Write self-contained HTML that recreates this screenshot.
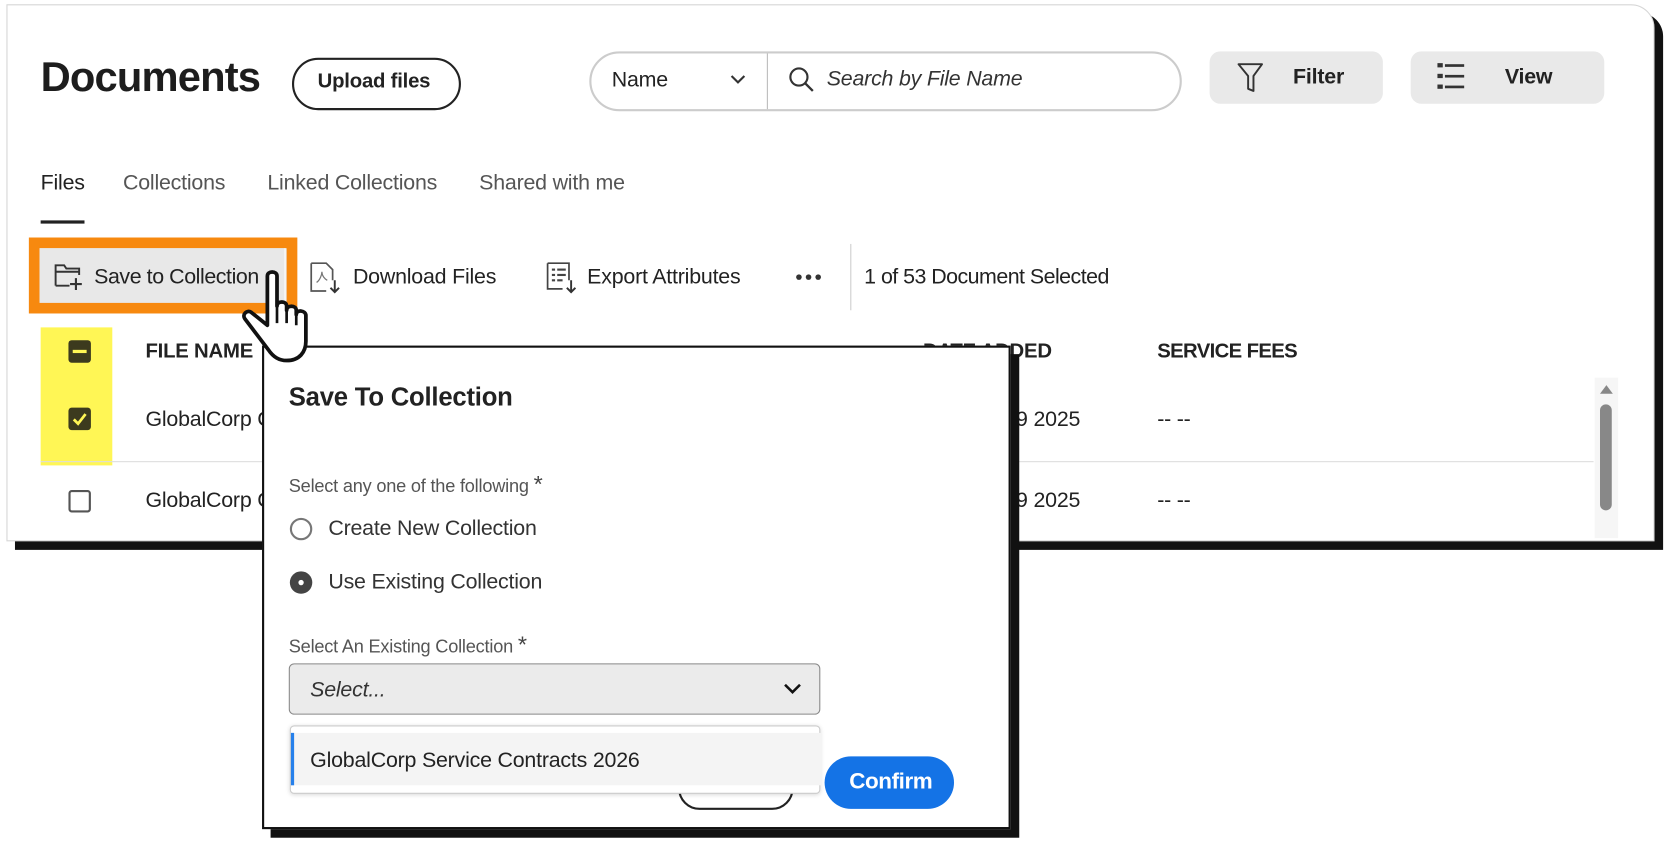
<!DOCTYPE html>
<html><head><meta charset="utf-8"><style>
html,body{margin:0;padding:0;background:#fff;width:1677px;height:842px;overflow:hidden}
#w{position:absolute;left:0;top:0;width:1568px;height:787px;transform:scale(1.06952,1.06989);transform-origin:0 0;font-family:"Liberation Sans",sans-serif;color:#222}
.a{position:absolute}
.card{left:6px;top:4px;width:1539px;height:500px;border:1px solid #d6d6d6;border-radius:0 22px 0 0;background:#fff;box-shadow:8px 8px 0 #111}
.t{white-space:nowrap;position:absolute;letter-spacing:-0.2px}
.ico{position:absolute}
</style></head><body><div id="w">
<div class="a card"></div>
<div class="t" style="left:38px;top:51px;font-size:39px;font-weight:bold;color:#1d1d1d;letter-spacing:-0.8px">Documents</div>
<div class="a" style="left:273px;top:54px;width:154px;height:45px;border:2px solid #222;border-radius:25px"></div>
<div class="t" style="left:297px;top:66px;font-size:19px;font-weight:bold">Upload files</div>
<div class="a" style="left:551px;top:48px;width:550px;height:52px;border:2px solid #ccc;border-radius:28px"></div>
<div class="a" style="left:717px;top:50px;width:1px;height:52px;background:#bbb"></div>
<div class="t" style="left:572px;top:64px;font-size:20px">Name</div>
<svg class="ico" style="left:682px;top:68px" width="16" height="12"><path d="M2 3l6 6 6-6" stroke="#333" stroke-width="2" fill="none"/></svg>
<svg class="ico" style="left:736px;top:61px" width="28" height="28"><circle cx="11" cy="11" r="8" stroke="#333" stroke-width="2" fill="none"/><path d="M17 17l7 7" stroke="#333" stroke-width="2.2"/></svg>
<div class="t" style="left:773px;top:63px;font-size:20px;font-style:italic;color:#333">Search by File Name</div>
<div class="a" style="left:1131px;top:48px;width:162px;height:49px;background:#e9e9e9;border-radius:10px"></div>
<svg class="ico" style="left:1156px;top:58px" width="28" height="30"><path d="M2 2h22l-8 11v14l-5-2V13z" stroke="#333" stroke-width="1.8" fill="none" stroke-linejoin="round"/></svg>
<div class="t" style="left:1209px;top:61px;font-size:20px;font-weight:bold">Filter</div>
<div class="a" style="left:1319px;top:48px;width:181px;height:49px;background:#e9e9e9;border-radius:10px"></div>
<svg class="ico" style="left:1343px;top:58px" width="30" height="28"><g fill="#333"><rect x="1" y="1" width="5" height="4"/><rect x="8" y="2" width="18" height="2.5"/><rect x="1" y="11" width="5" height="4"/><rect x="8" y="12" width="18" height="2.5"/><rect x="1" y="21" width="5" height="4"/><rect x="8" y="22" width="18" height="2.5"/></g></svg>
<div class="t" style="left:1407px;top:61px;font-size:20px;font-weight:bold">View</div>
<div class="t" style="left:38px;top:160px;font-size:20px;color:#222">Files</div>
<div class="t" style="left:115px;top:160px;font-size:20px;color:#555">Collections</div>
<div class="t" style="left:250px;top:160px;font-size:20px;color:#555">Linked Collections</div>
<div class="t" style="left:448px;top:160px;font-size:20px;color:#555">Shared with me</div>
<div class="a" style="left:38px;top:206px;width:41px;height:3px;background:#222"></div>
<div class="a" style="left:27px;top:222px;width:231px;height:51px;border:10px solid #f7890f;background:#e8e8e8"></div>
<div class="a" style="left:37px;top:232px;width:229px;height:51px;background:#e8e8e8;border-right:1px solid #fff"></div>
<svg class="ico" style="left:50px;top:245px" width="30" height="28"><path d="M2 22V3h8l2 3h12v6M2 22h13M2 9h22" stroke="#333" stroke-width="1.8" fill="none"/><path d="M21 15v11M15.5 20.5h11" stroke="#333" stroke-width="2"/></svg>
<div class="t" style="left:88px;top:248px;font-size:20px;letter-spacing:-0.4px">Save to Collection</div>
<svg class="ico" style="left:289px;top:244px" width="32" height="32"><path d="M2 2h14l6 6v10M2 2v26h14" stroke="#555" stroke-width="1.6" fill="none"/><path d="M7 20c3-2 5-7 5-10 0 4 3 7 5 8" stroke="#777" stroke-width="1.2" fill="none"/><path d="M24 18v11M20 25l4 4 4-4" stroke="#333" stroke-width="1.8" fill="none"/></svg>
<div class="t" style="left:330px;top:248px;font-size:20px">Download Files</div>
<svg class="ico" style="left:510px;top:244px" width="32" height="32"><path d="M2 2h20v16M2 2v24h14" stroke="#444" stroke-width="1.6" fill="none"/><g fill="#444"><rect x="6" y="7" width="3" height="2"/><rect x="11" y="7" width="8" height="2"/><rect x="6" y="12" width="3" height="2"/><rect x="11" y="12" width="8" height="2"/><rect x="6" y="17" width="3" height="2"/><rect x="11" y="17" width="5" height="2"/></g><path d="M24 18v11M20 25l4 4 4-4" stroke="#333" stroke-width="1.8" fill="none"/></svg>
<div class="t" style="left:549px;top:248px;font-size:20px">Export Attributes</div>
<svg class="ico" style="left:743px;top:255px" width="28" height="8"><circle cx="4" cy="4" r="2.6" fill="#333"/><circle cx="13" cy="4" r="2.6" fill="#333"/><circle cx="22" cy="4" r="2.6" fill="#333"/></svg>
<div class="a" style="left:795px;top:228px;width:1px;height:62px;background:#ccc"></div>
<div class="t" style="left:808px;top:248px;font-size:20px;letter-spacing:-0.5px">1 of 53 Document Selected</div>
<div class="a" style="left:38px;top:306px;width:67px;height:129px;background:#fff655"></div>
<div class="a" style="left:64px;top:318px;width:21px;height:21px;background:#3c3a1e;border-radius:3px"></div>
<div class="a" style="left:68px;top:327px;width:13px;height:3px;background:#fff655"></div>
<div class="t" style="left:136px;top:318px;font-size:19px;font-weight:bold">FILE NAME</div>
<div class="t" style="left:863px;top:318px;font-size:19px;font-weight:bold">DATE ADDED</div>
<div class="t" style="left:1082px;top:318px;font-size:19px;font-weight:bold;letter-spacing:-0.6px">SERVICE FEES</div>
<div class="a" style="left:64px;top:381px;width:21px;height:21px;background:#3c3a1e;border-radius:3px"></div>
<svg class="ico" style="left:64px;top:381px" width="21" height="21"><path d="M5 11l4 4 7-9" stroke="#fff655" stroke-width="2.6" fill="none"/></svg>
<div class="t" style="left:136px;top:381px;font-size:20px">GlobalCorp Co</div>
<div class="t" style="left:950px;top:381px;font-size:20px">9 2025</div>
<div class="t" style="left:1082px;top:381px;font-size:20px">-- --</div>
<div class="a" style="left:38px;top:431px;width:1452px;height:1px;background:#ddd"></div>
<div class="a" style="left:64px;top:458px;width:17px;height:17px;border:2px solid #555;border-radius:3px"></div>
<div class="t" style="left:136px;top:457px;font-size:20px">GlobalCorp Co</div>
<div class="t" style="left:950px;top:457px;font-size:20px">9 2025</div>
<div class="t" style="left:1082px;top:457px;font-size:20px">-- --</div>
<div class="a" style="left:1491px;top:353px;width:22px;height:150px;background:#f6f6f6"></div>
<svg class="ico" style="left:1495px;top:358px" width="14" height="12"><path d="M1 10L7 2l6 8z" fill="#888"/></svg>
<div class="a" style="left:1496px;top:378px;width:11px;height:99px;background:#888;border-radius:6px"></div>
<div class="a" style="left:245px;top:323px;width:696px;height:448px;border:2px solid #111;background:#fff;box-shadow:8px 8px 0 #111"></div>
<div class="t" style="left:270px;top:358px;font-size:24px;font-weight:bold">Save To Collection</div>
<div class="t" style="left:270px;top:440px;font-size:17px;color:#555">Select any one of the following <span style="font-size:22px;color:#444">*</span></div>
<div class="a" style="left:271px;top:484px;width:17px;height:17px;border:2px solid #777;border-radius:50%"></div>
<div class="t" style="left:307px;top:483px;font-size:20px;color:#333">Create New Collection</div>
<div class="a" style="left:271px;top:534px;width:21px;height:21px;background:#444;border-radius:50%"></div>
<div class="a" style="left:279px;top:542px;width:5px;height:5px;background:#fff;border-radius:50%"></div>
<div class="t" style="left:307px;top:533px;font-size:20px;color:#333">Use Existing Collection</div>
<div class="t" style="left:270px;top:590px;font-size:17px;color:#555">Select An Existing Collection <span style="font-size:22px;color:#444">*</span></div>
<div class="a" style="left:270px;top:620px;width:495px;height:46px;background:#ebebeb;border:1px solid #888;border-radius:5px"></div>
<div class="t" style="left:290px;top:634px;font-size:20px;font-style:italic;color:#333">Select...</div>
<svg class="ico" style="left:732px;top:638px" width="18" height="12"><path d="M2 2l7 7 7-7" stroke="#111" stroke-width="2.4" fill="none"/></svg>
<div class="a" style="left:634px;top:715px;width:104px;height:38px;border:2px solid #222;border-radius:20px"></div>
<div class="a" style="left:771px;top:707px;width:121px;height:49px;background:#1473e6;border-radius:25px"></div>
<div class="t" style="left:794px;top:719px;font-size:21px;font-weight:bold;color:#fff;letter-spacing:-0.4px">Confirm</div>
<div class="a" style="left:271px;top:678px;width:494px;height:62px;background:#fff;border:1px solid #ccc;border-radius:4px;box-shadow:0 1px 4px rgba(0,0,0,.15)"></div>
<div class="a" style="left:272px;top:685px;width:493px;height:49px;background:#f4f4f4;border-left:3px solid #2680eb"></div>
<div class="t" style="left:290px;top:700px;font-size:20px;color:#222">GlobalCorp Service Contracts 2026</div>
<svg class="ico" style="left:220px;top:250px" width="75" height="92"><path d="M30 8c0-5 9-5 9 0v28c0-5 9-5 9 0v4c0-5 9-5 9 0v4c0-5 9-4 9 1v24c0 10-6 18-18 18H48c-8 0-13-4-17-10L9 48c-3-4 2-9 6-6l15 12z" fill="#fff" stroke="#111" stroke-width="3.5" stroke-linejoin="round"/><path d="M39 36v16M48 40v12M57 44v10" stroke="#111" stroke-width="2.5"/></svg>
</div></body></html>
